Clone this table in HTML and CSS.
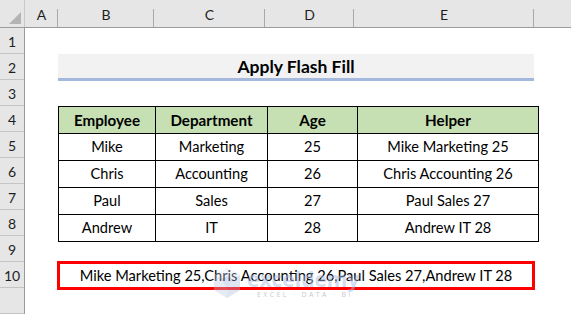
FILE: index.html
```html
<!DOCTYPE html>
<html>
<head>
<meta charset="utf-8">
<link rel="stylesheet" href="styles.css">
</head>
<body>
<div class="sheet">
  <div class="colhdr">
    <div class="corner"><span class="tri"></span></div>
    <div class="ch">A</div>
    <div class="ch">B</div>
    <div class="ch">C</div>
    <div class="ch">D</div>
    <div class="ch">E</div>
    <div class="ch last"></div>
  </div>
  <div class="body">
    <div class="rowhdr">
      <div class="rh">1</div>
      <div class="rh">2</div>
      <div class="rh">3</div>
      <div class="rh">4</div>
      <div class="rh">5</div>
      <div class="rh">6</div>
      <div class="rh">7</div>
      <div class="rh">8</div>
      <div class="rh">9</div>
      <div class="rh">10</div>
      <div class="rh"></div>
    </div>
    <div class="grid">
      <div class="title">Apply Flash Fill</div>
      <table class="data">
        <tr class="head"><th class="cb">Employee</th><th class="cc">Department</th><th class="cd">Age</th><th class="ce">Helper</th></tr>
        <tr><td>Mike</td><td>Marketing</td><td>25</td><td>Mike Marketing 25</td></tr>
        <tr><td>Chris</td><td>Accounting</td><td>26</td><td>Chris Accounting 26</td></tr>
        <tr><td>Paul</td><td>Sales</td><td>27</td><td>Paul Sales 27</td></tr>
        <tr><td>Andrew</td><td>IT</td><td>28</td><td>Andrew IT 28</td></tr>
      </table>
      <div class="result">Mike Marketing 25,Chris Accounting 26,Paul Sales 27,Andrew IT 28</div>
    </div>
  </div>
  <div class="watermark">
    <svg class="wm-icon" width="28" height="34" viewBox="0 0 28 34">
      <polygon points="14,2 27,9 27,24 14,32 1,24 1,9" fill="#b9c6e2"/>
      <polygon points="14,2 27,9 14,16 1,9" fill="#dbe2f1"/>
      <polygon points="14,16 27,9 27,24 14,32" fill="#a9b8da"/>
      <polygon points="8,13 14,10 20,13 14,22" fill="#98a9d2"/>
    </svg>
    <div class="wm-text">
      <div class="wm-name">exceldemy</div>
      <div class="wm-sub">EXCEL · DATA · BI</div>
    </div>
  </div>
</div>
</body>
</html>
```

FILE: styles.css
```css
html, body {
  margin: 0;
  padding: 0;
  background: #ffffff;
}
body {
  width: 571px;
  height: 318px;
  overflow: hidden;
  font-family: "Lato", "Open Sans", sans-serif;
  color: #000;
}
.sheet {
  position: relative;
  width: 571px;
  height: 318px;
}
.colhdr {
  display: grid;
  grid-template-columns: 25px 33px 96px 111px 89px 180px 1fr;
  height: 28px;
  background: #e6e6e6;
  border-bottom: 1px solid #9b9b9b;
  box-sizing: border-box;
}
.corner {
  position: relative;
  border-right: 1px solid #c8c8c8;
}
.tri {
  position: absolute;
  right: 3px;
  bottom: 3px;
  width: 0;
  height: 0;
  border-left: 12px solid transparent;
  border-bottom: 12px solid #b4b4b4;
}
.ch {
  display: flex;
  align-items: flex-end;
  justify-content: center;
  padding-bottom: 4px;
  font-size: 14px;
  color: #1e1e1e;
  position: relative;
}
.ch::after {
  content: "";
  position: absolute;
  right: 0;
  top: 9px;
  bottom: 0;
  width: 1px;
  background: #a8a8a8;
}
.ch.last::after { display: none; }
.body {
  display: flex;
}
.rowhdr {
  width: 25px;
  background: #e6e6e6;
  border-right: 1px solid #9b9b9b;
  box-sizing: border-box;
  flex: none;
}
.rh {
  height: 26px;
  box-sizing: border-box;
  border-bottom: 1px solid #c4c4c4;
  display: flex;
  align-items: flex-end;
  justify-content: center;
  padding-bottom: 3px;
  font-size: 14px;
  color: #1e1e1e;
}
.grid {
  display: grid;
  grid-template-columns: 33px 476px 1fr;
  grid-template-rows: 26px 26px 26px 130px 26px 26px;
  flex: 1;
}
.title {
  grid-column: 2;
  grid-row: 2;
  background: #f2f2f2;
  border-bottom: 3px solid #a5b8de;
  height: 27px;
  box-sizing: border-box;
  display: flex;
  align-items: center;
  justify-content: center;
  font-weight: 700;
  font-size: 17.5px;
  padding-top: 1px;
}
.data {
  grid-column: 2;
  grid-row: 4;
  border-collapse: collapse;
  table-layout: fixed;
  width: 476px;
  height: 130px;
}
.data td, .data th {
  border: 1px solid #000;
  height: 26px;
  padding: 0;
  text-align: center;
  font-size: 14.6px;
  line-height: 24px;
}
.data th {
  background: #c6e0b4;
  font-weight: 700;
  font-size: 15.2px;
}
.cb { width: 96px; }
.cc { width: 111px; }
.cd { width: 89px; }
.ce { width: 180px; }
.result {
  grid-column: 2;
  grid-row: 6;
  margin-left: -1px;
  margin-top: -1px;
  width: 478px;
  height: 29px;
  box-sizing: border-box;
  border: 3px solid #ff0000;
  display: flex;
  align-items: center;
  justify-content: center;
  font-size: 14.65px;
}
.watermark {
  position: absolute;
  left: 213px;
  top: 266px;
  display: flex;
  align-items: center;
  gap: 6px;
  pointer-events: none;
}
.wm-icon {
  opacity: 0.35;
}
.wm-name {
  font-family: "Open Sans", sans-serif;
  font-weight: 700;
  font-size: 21px;
  line-height: 22px;
  color: rgba(170, 188, 228, 0.5);
}
.wm-sub {
  font-family: "Open Sans", sans-serif;
  font-size: 7px;
  letter-spacing: 2.4px;
  color: rgba(160, 160, 160, 0.6);
  margin-left: 10px;
  line-height: 9px;
}
```
